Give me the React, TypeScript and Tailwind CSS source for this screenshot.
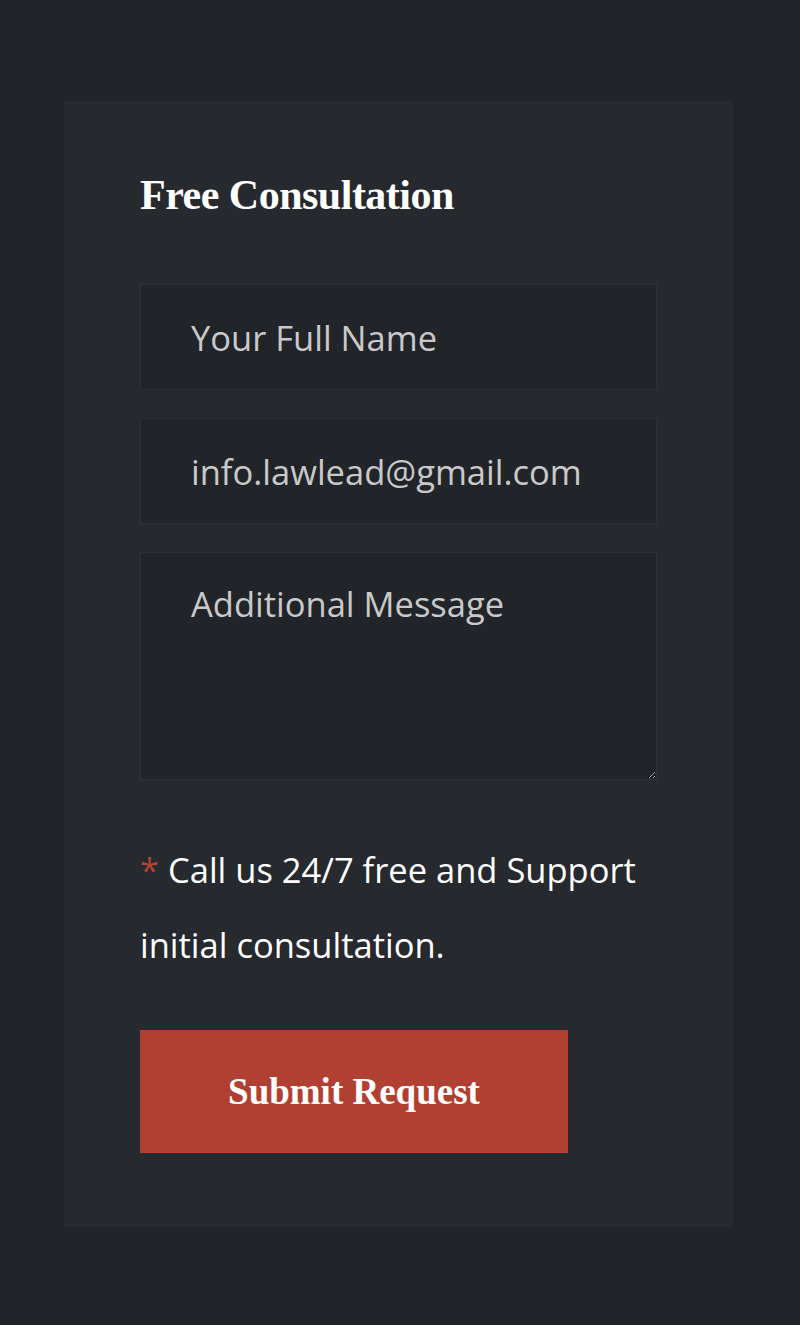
import React from "react";

export default function App() {
  return (
    <div className="min-h-[1325px] w-[800px] bg-[#212428] pt-[101px] pl-[64px]">
      <div className="w-[669px] h-[1126px] bg-[#26292d] pl-[76px] pt-[66px]">
        <h2
          className="text-[42px] leading-[56px] font-bold text-white tracking-[-0.5px]"
          style={{ fontFamily: '"Liberation Serif", serif' }}
        >
          Free Consultation
        </h2>
        <form className="mt-[61px] flex flex-col gap-[28px] w-[517px]" style={{ fontFamily: '"Open Sans", sans-serif' }}>
          <input
            className="h-[106px] w-full bg-[#212428] border border-[#2d3135] pl-[50px] text-[34.5px] font-medium text-[#d0d0d0] placeholder:text-[#c9c9c9] outline-none"
            placeholder="Your Full Name"
          />
          <input
            className="h-[106px] w-full bg-[#212428] border border-[#2d3135] pl-[50px] text-[34.5px] font-medium text-[#d0d0d0] placeholder:text-[#c9c9c9] outline-none"
            placeholder="info.lawlead@gmail.com"
          />
          <textarea
            className="h-[228px] w-full bg-[#212428] border border-[#2d3135] pl-[50px] pt-[28px] text-[34.5px] leading-[46px] font-medium text-[#d0d0d0] placeholder:text-[#c9c9c9] outline-none resize-y"
            placeholder="Additional Message"
          />
        </form>
        <p
          className="mt-[52px] w-[517px] text-[34.5px] leading-[75px] font-medium text-white"
          style={{ fontFamily: '"Open Sans", sans-serif' }}
        >
          <span className="text-[#b34334]">*</span> Call us 24/7 free and Support initial consultation.
        </p>
        <button
          className="mt-[48px] w-[428px] h-[123px] bg-[#b04032] text-white text-[37px] font-bold"
          style={{ fontFamily: '"Liberation Serif", serif' }}
        >
          Submit Request
        </button>
      </div>
    </div>
  );
}
